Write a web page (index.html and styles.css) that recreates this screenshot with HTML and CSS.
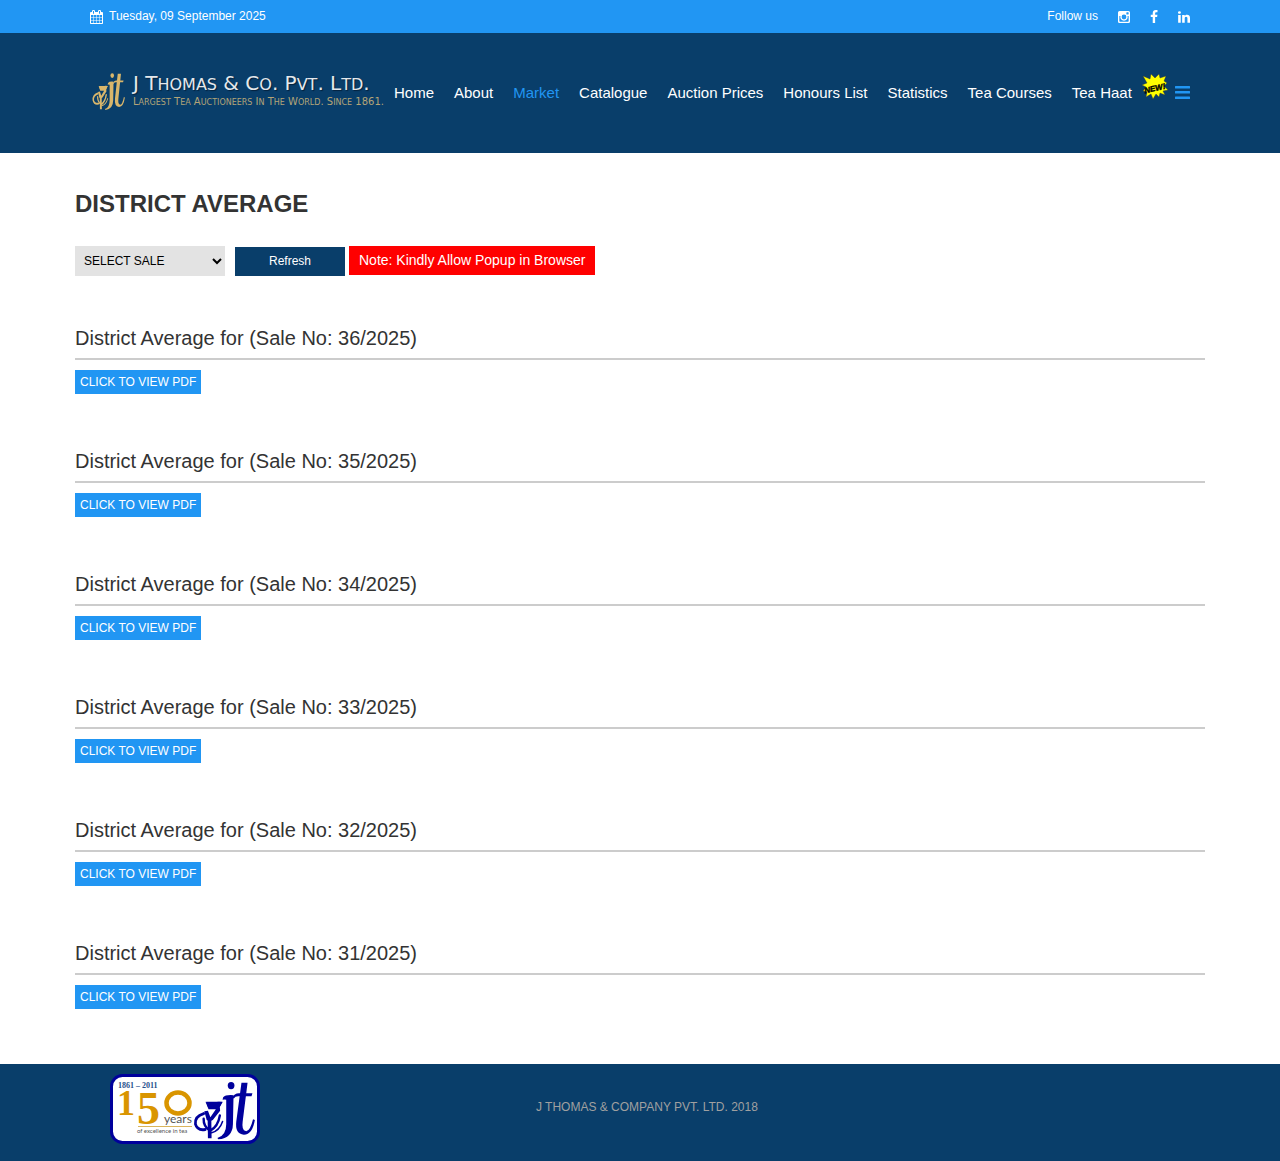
FILE: index.html
```html
<!DOCTYPE html>
<html lang="en">
<head>
<meta charset="utf-8">
<meta name="viewport" content="width=device-width, initial-scale=1">
<title>District Average - J Thomas &amp; Co. Pvt. Ltd.</title>
<link rel="stylesheet" href="styles.css">
</head>
<body>
<svg class="defs" aria-hidden="true">
  <symbol id="monogram" viewBox="15 30 210 185" preserveAspectRatio="none">
    <g fill="currentColor">
      <circle cx="140" cy="47" r="11"/>
      <path d="M114 82q8-8 34-6l-2 88q-1 42-48 46l-3-4q29-8 29-42V90q-6-2-12 0z"/>
      <path d="M174 38h20l-16 118q-4 27 10 29 14 2 24-36l6 2q-8 44-36 45-30-2-25-40z"/>
      <path d="M144 84q6-15 24-14h42l-3 9h-44q-10 0-14 7z"/>
      <path d="M56 96q14 6 28 2 14-4 28-1l-9 14 1 12-24 28q-10 6-20 0l-8-26 12-2 8 20 18-24H66z"/>
      <path d="M58 96h54l-9 16H64z"/>
      <path d="M63 145h12l1 62h-12z"/>
    </g>
    <g fill="none" stroke="currentColor" stroke-linecap="round">
      <path stroke-width="9" d="M50 132q-30 8-27 32 6 20 32 16"/>
      <path stroke-width="8" d="M69 182q-20-12-19-34M71 184q26-12 32-46"/>
      <path stroke-width="5" d="M76 190q26-6 36-34"/>
    </g>
  </symbol>
</svg>

<div class="topbar">
  <div class="container topbar-inner">
    <div class="date">
      <svg class="icon calendar" viewBox="64 0 1664 1792" aria-hidden="true"><path d="M192 1664h288v-288h-288v288zm352 0h320v-288h-320v288zm-352-352h288v-320h-288v320zm352 0h320v-320h-320v320zm-352-384h288v-288h-288v288zm736 736h320v-288h-320v288zm-384-736h320v-288h-320v288zm768 736h288v-288h-288v288zm-384-352h320v-320h-320v320zm-352-864v-288q0-13-9.500-22.500t-22.500-9.500h-64q-13 0-22.500 9.500t-9.500 22.500v288q0 13 9.500 22.500t22.500 9.500h64q13 0 22.500-9.500t9.500-22.500zm736 864h288v-320h-288v320zm-384-384h320v-288h-320v288zm384 0h288v-288h-288v288zm32-480v-288q0-13-9.500-22.500t-22.500-9.500h-64q-13 0-22.500 9.500t-9.500 22.500v288q0 13 9.500 22.500t22.500 9.500h64q13 0 22.500-9.500t9.500-22.500zm384-64v1280q0 52-38 90t-90 38h-1408q-52 0-90-38t-38-90v-1280q0-52 38-90t90-38h128v-96q0-66 47-113t113-47h64q66 0 113 47t47 113v96h384v-96q0-66 47-113t113-47h64q66 0 113 47t47 113v96h128q52 0 90 38t38 90z"/></svg>
      <span>Tuesday, 09 September 2025</span>
    </div>
    <div class="social">
      <span>Follow us</span>
      <a href="#" aria-label="Instagram"><svg class="icon instagram" viewBox="0 0 24 24" aria-hidden="true"><path fill-rule="evenodd" d="M3 0h18q3 0 3 3v18q0 3-3 3H3q-3 0-3-3V3q0-3 3-3zM2.700 10v10q0 1.300 1.300 1.300h16q1.300 0 1.300-1.300V10h-2.200a7.400 7.400 0 1 1-14.200 0zM12 7.200a4.800 4.800 0 1 0 0 9.600 4.800 4.800 0 0 0 0-9.600zM17.500 2.700q-.8 0-.8.8v2.700q0 .8.800.8h3q.8 0 .8-.8V3.500q0-.8-.8-.8z"/></svg></a>
      <a href="#" aria-label="Facebook"><svg class="icon facebook" viewBox="384 0 1024 1792" aria-hidden="true"><path d="M1343 12v264h-157q-86 0-116 36t-30 108v189h293l-39 296h-254v759h-306v-759h-255v-296h255v-218q0-186 104-288.500t277-102.500q147 0 228 12z"/></svg></a>
      <a href="#" aria-label="LinkedIn"><svg class="icon linkedin" viewBox="128 0 1536 1792" aria-hidden="true"><path d="M477 625v991h-330v-991h330zm21-306q1 73-50.500 122t-135.500 49h-2q-82 0-132-49t-50-122q0-74 51.500-122.500t134.500-48.500 133 48.500 51 122.500zm1166 729v568h-329v-530q0-105-40.500-164.500t-126.500-59.500q-63 0-105.500 34.500t-63.500 85.500q-11 30-11 81v553h-329q2-399 2-647t-1-296l-1-48h329v144h-2q20-32 41-56t56.500-52 87-43.500 114.500-15.500q171 0 275 113.500t104 332.500z"/></svg></a>
    </div>
  </div>
</div>

<header class="header">
  <div class="container header-inner">
    <a class="logo" href="#" aria-label="J Thomas &amp; Co. Pvt. Ltd.">
      <svg class="logo-mark" aria-hidden="true"><use href="#monogram" width="34" height="39"/></svg>
      <span class="logo-text">
        <span class="logo-name">J T<small>HOMAS</small> &amp; C<small>O</small>. P<small>VT</small>. L<small>TD</small>.</span>
        <span class="logo-tagline">L<small>ARGEST</small> T<small>EA</small> A<small>UCTIONEERS</small> I<small>N</small> T<small>HE</small> W<small>ORLD</small>. S<small>INCE</small> 1861.</span>
      </span>
    </a>
    <nav class="nav">
      <a href="#">Home</a>
      <a href="#">About</a>
      <a class="active" href="#">Market</a>
      <a href="#">Catalogue</a>
      <a href="#">Auction Prices</a>
      <a href="#">Honours List</a>
      <a href="#">Statistics</a>
      <a href="#">Tea Courses</a>
      <a href="#">Tea Haat</a>
    </nav>
    <svg class="new-badge" viewBox="0 0 26 26" role="img" aria-label="New">
      <path fill="#ff0" stroke="#333" stroke-width=".4" d="M1 3l7 3 1-5 4 4 4-4 1 4 6-2-2 5 3 2-3 3 4 4-5 1 2 4-5-2-1 4-3-3-3 5-2-5-5 3 1-5-4-1 3-4-4-2 5-2z"/>
      <text x="2" y="18" transform="rotate(-13 13 15)">NEW!</text>
    </svg>
    <button class="menu" type="button" aria-label="Open menu">
      <svg viewBox="0 0 15 13" aria-hidden="true"><path d="M.5 0h14q.5 0 .5.500v1.500q0 .5-.5.500H.5Q0 2.500 0 2V.5Q0 0 .5 0zM.5 5h14q.5 0 .5.500V7q0 .5-.5.500H.5Q0 7.500 0 7V5.500Q0 5 .5 5zM.5 10.500h14q.5 0 .5.500v1.500q0 .5-.5.500H.5q-.5 0-.5-.5V11q0-.5.5-.5z"/></svg>
    </button>
  </div>
</header>

<main class="main">
  <h1>DISTRICT AVERAGE</h1>
  <form class="filter">
    <select aria-label="Select sale"><option>SELECT SALE</option></select>
    <button type="button">Refresh</button>
    <span class="note">Note: Kindly Allow Popup in Browser</span>
  </form>
  <section class="sale"><h2>District Average for (Sale No: 36/2025)</h2><a href="#">CLICK TO VIEW PDF</a></section>
  <section class="sale"><h2>District Average for (Sale No: 35/2025)</h2><a href="#">CLICK TO VIEW PDF</a></section>
  <section class="sale"><h2>District Average for (Sale No: 34/2025)</h2><a href="#">CLICK TO VIEW PDF</a></section>
  <section class="sale"><h2>District Average for (Sale No: 33/2025)</h2><a href="#">CLICK TO VIEW PDF</a></section>
  <section class="sale"><h2>District Average for (Sale No: 32/2025)</h2><a href="#">CLICK TO VIEW PDF</a></section>
  <section class="sale"><h2>District Average for (Sale No: 31/2025)</h2><a href="#">CLICK TO VIEW PDF</a></section>
</main>

<footer class="footer">
  <div class="footer-inner">
    <svg class="anniversary" viewBox="0 0 150 70" role="img" aria-label="150 years of excellence in tea">
      <rect x="1.500" y="1.500" width="147" height="67" rx="11" fill="#fff" stroke="#00009c" stroke-width="3"/>
      <text class="years-range" x="8" y="14">1861 – 2011</text>
      <text class="numeral one" x="7" y="41">1</text>
      <text class="numeral five" x="27" y="50">5</text>
      <ellipse cx="68" cy="29" rx="11.500" ry="10.500" fill="none" stroke="#d99500" stroke-width="4.500"/>
      <text class="years" x="54" y="49">years</text>
      <path stroke="#d9b45c" d="M28 52.500h54"/>
      <text class="motto" x="27" y="59">of excellence in tea</text>
      <use href="#monogram" x="83" y="6" width="64" height="61" color="#00009c"/>
    </svg>
    <p>J THOMAS &amp; COMPANY PVT. LTD. 2018</p>
  </div>
</footer>
</body>
</html>
```
FILE: styles.css
```css
* { box-sizing: border-box; }

body {
  margin: 0;
  background: #fff;
  color: #333;
  font: 12px/18px "Liberation Sans", Arial, sans-serif;
}

a { color: inherit; text-decoration: none; }
.defs { position: absolute; width: 0; height: 0; }

.container {
  max-width: 1130px;
  margin: 0 auto;
  padding: 0 15px;
}

.topbar { background: #2196f3; color: #fff; }
.topbar-inner {
  display: flex;
  justify-content: space-between;
  align-items: center;
  height: 33px;
}
.date, .social { display: flex; align-items: center; }
.date { gap: 6px; }
.date span, .social span { padding-bottom: 2px; }
.social { gap: 20px; }
.social a { display: flex; }
.icon { height: 14px; fill: currentColor; }
.calendar { width: 13px; }
.instagram { width: 12px; height: 12px; }
.facebook { width: 8px; }
.linkedin { width: 12px; }

.header { background: #093e6a; color: #fff; }
.header-inner { display: flex; align-items: center; height: 120px; }
.logo {
  display: flex;
  align-items: center;
  gap: 7px;
  width: 304px;
  padding: 0 0 4px 2px;
}
.logo-mark { width: 34px; height: 39px; color: #d9b66b; }
.logo-text { display: flex; flex-direction: column; white-space: nowrap; }
.logo-name {
  color: #e4e8ec;
  font: 20px/20px "DejaVu Sans", sans-serif;
  text-shadow: 1px 1px 1px #04213c;
}
.logo-name small { font-size: 16px; }
.logo-tagline {
  color: #b3a478;
  font: 10px/14px "DejaVu Sans", sans-serif;
}
.logo-tagline small { font-size: 8px; }

.nav { display: flex; gap: 20px; font-size: 15px; white-space: nowrap; }
.nav .active { color: #2196f3; }
.new-badge { width: 26px; height: 26px; margin: 0 7px 14px 10px; }
.new-badge text { font: italic bold 8px "Liberation Sans", sans-serif; fill: #000; stroke: #000; stroke-width: .4px; }
.menu { margin: 0 0 2px auto; padding: 0; border: 0; background: none; }
.menu svg { display: block; width: 15px; height: 13px; fill: #2196f3; }

.main { max-width: 1130px; margin: 0 auto; padding: 37px 0 0; }
h1 { margin: 0; font-size: 24px; line-height: 28px; }

.filter { display: flex; align-items: flex-start; margin: 28px 0 50px; }
.filter select {
  width: 150px;
  height: 30px;
  margin-right: 10px;
  padding: 0 5px;
  border: 0;
  border-radius: 0;
  background: #e3e3e3;
  color: #000;
  font: inherit;
}
.filter button {
  width: 110px;
  height: 29px;
  margin: 1px 4px 0 0;
  padding: 0 6px 2px;
  border: 0;
  background: #093e6a;
  color: #fff;
  font: inherit;
}
.note { padding: 4px 10px 5px; background: #f00; color: #fff; font-size: 14px; line-height: 20px; }

.sale { padding-bottom: 55px; }
.sale h2 {
  margin: 0 0 10px;
  padding-bottom: 8px;
  border-bottom: 2px solid #ccc;
  font-size: 20px;
  font-weight: 400;
  line-height: 24px;
}
.sale a {
  display: block;
  width: fit-content;
  padding: 3px 5px;
  background: #2196f3;
  color: #fff;
}

.footer { background: #093e6a; color: #a0a0a0; }
.footer-inner {
  display: grid;
  grid-template-columns: 426px 1fr;
  align-items: center;
  max-width: 1130px;
  margin: 0 auto;
  padding: 10px 0 17px 35px;
}
.footer p { margin: 0 0 4px; }
.anniversary { width: 150px; height: 70px; }
.years-range { font: bold 8px "Liberation Serif", serif; fill: #27518c; }
.numeral { font-family: "Liberation Serif", serif; font-weight: bold; fill: #d99500; }
.one { font-size: 36px; }
.five { font-size: 46px; }
.years { font: 12px "Lato", sans-serif; fill: #555; }
.motto { font: 6px "Lato", sans-serif; fill: #555; }
```
